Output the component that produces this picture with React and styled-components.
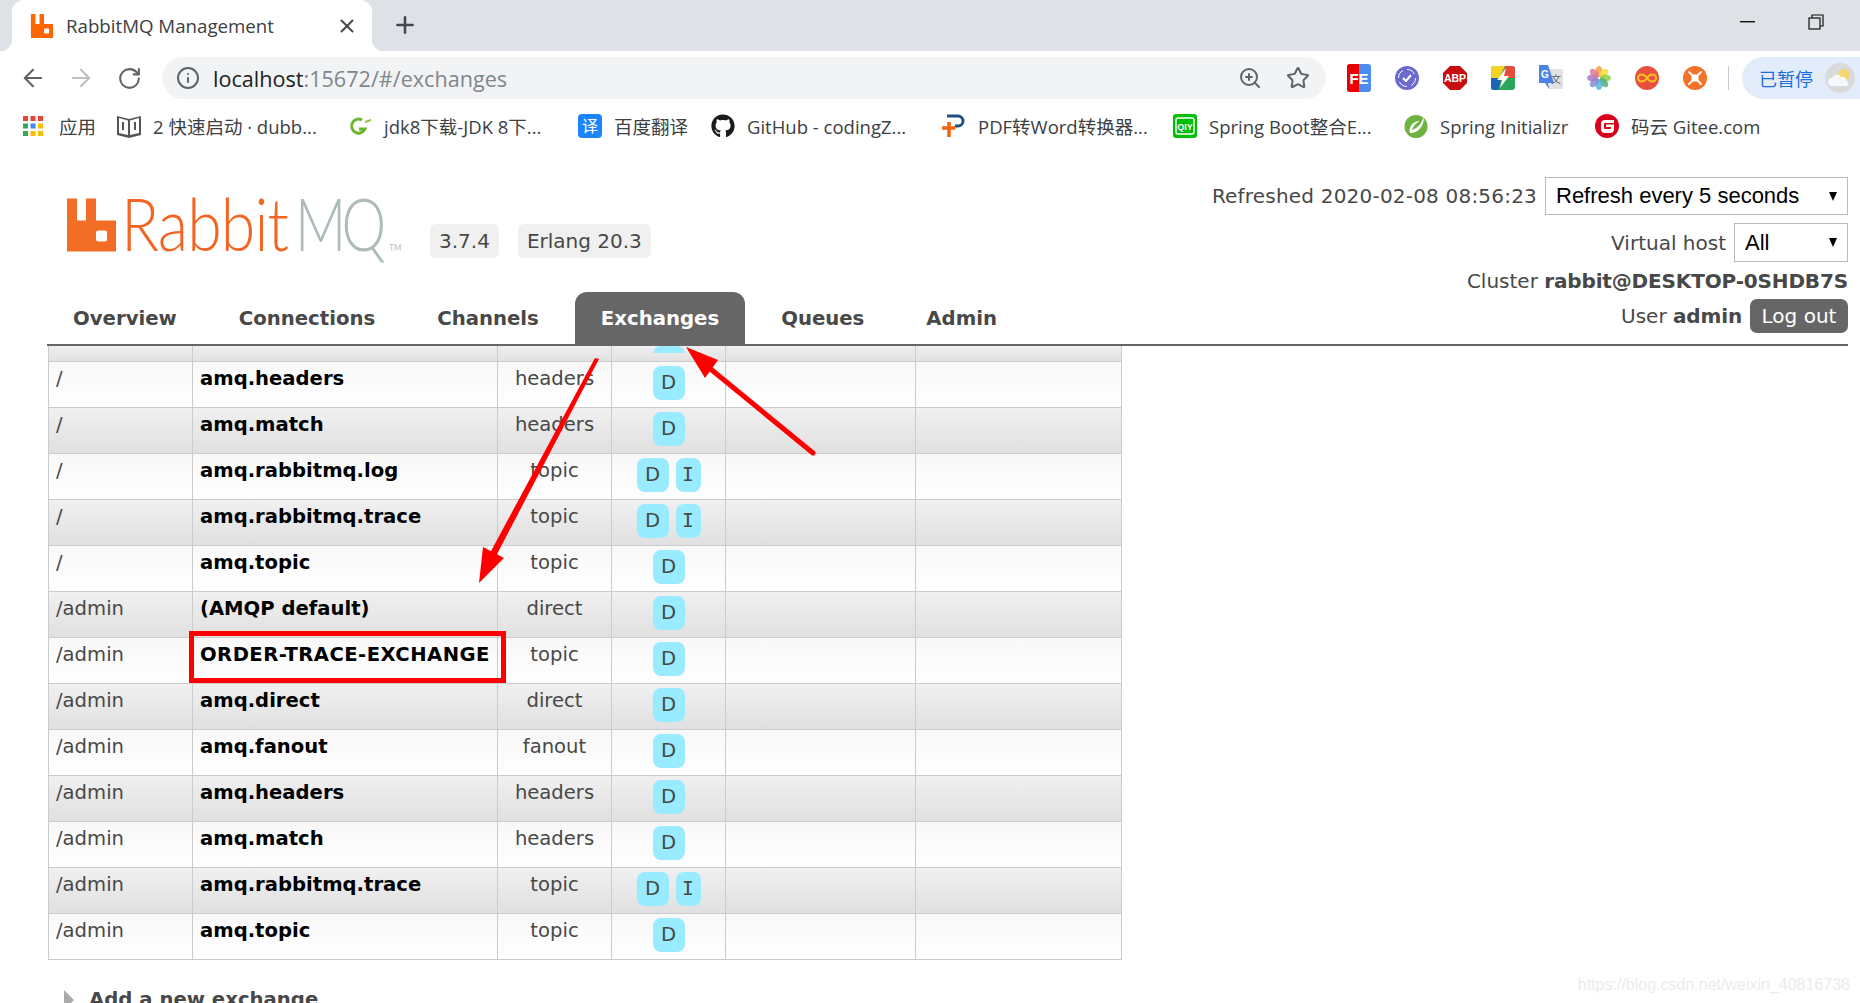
import React from 'react'
import styled, { createGlobalStyle } from 'styled-components'
import { ArrowLeft, ArrowRight, RotateCw, Info, ZoomIn, Star, X, Plus } from 'lucide-react'
import { FaGithub } from 'react-icons/fa'

const GlobalStyle = createGlobalStyle`
  html, body { margin: 0; padding: 0; background: #fff; overflow: hidden; }
`

const UI_FONT = `"Open Sans", "Noto Sans CJK SC", sans-serif`
const PAGE_FONT = `"DejaVu Sans", Verdana, sans-serif`

const Frame = styled.div`
  position: relative;
  width: 1860px;
  height: 1003px;
  overflow: hidden;
  background: #fff;
`

/* browser chrome */
const TabStrip = styled.div`
  display: flex;
  align-items: flex-end;
  height: 51px;
  padding: 0 36px 0 12px;
  background: #dee1e6;
  box-sizing: border-box;
`
const Tab = styled.div`
  position: relative;
  display: flex;
  align-items: center;
  width: 360px;
  height: 51px;
  padding: 0 14px 0 18px;
  box-sizing: border-box;
  background: #fff;
  border-radius: 12px 12px 0 0;
  font: 18.7px ${UI_FONT};
  color: #3c4043;

  &::before, &::after {
    content: '';
    position: absolute;
    bottom: 0;
    width: 12px;
    height: 12px;
  }
  &::before { left: -12px; background: radial-gradient(circle at 0 0, #dee1e6 12px, #fff 12.5px); }
  &::after { right: -12px; background: radial-gradient(circle at 100% 0, #dee1e6 12px, #fff 12.5px); }
`
const TabTitle = styled.span`
  margin-left: 12px;
  flex: 1;
`
const NewTab = styled.div`
  display: flex;
  margin: 0 0 13px 20px;
  color: #45484d;
`
const WindowButtons = styled.div`
  display: flex;
  align-items: center;
  gap: 53px;
  margin: 0 0 21px auto;
`
const Toolbar = styled.div`
  display: flex;
  align-items: center;
  height: 54px;
  padding: 0 0 0 9px;
  box-sizing: border-box;
`
const NavButton = styled.div`
  display: flex;
  justify-content: center;
  width: 48px;
  color: ${p => (p.$off ? '#bdc1c6' : '#5f6368')};
`
const Omnibox = styled.div`
  display: flex;
  align-items: center;
  width: 1164px;
  height: 42px;
  margin-left: 9px;
  padding: 0 16px 0 14px;
  box-sizing: border-box;
  border-radius: 21px;
  background: #f1f3f4;
  color: #5f6368;
`
const Url = styled.div`
  margin-left: 13px;
  flex: 1;
  font: 21.6px ${UI_FONT};
  color: #80868b;
  b { font-weight: 400; color: #202124; }
`
const OmniIcons = styled.div`
  display: flex;
  align-items: center;
  gap: 24px;
`
const Extensions = styled.div`
  display: flex;
  align-items: center;
  margin-left: 9px;
`
const ExtSlot = styled.div`
  display: flex;
  justify-content: center;
  width: 48px;
`
const Divider = styled.div`
  width: 1px;
  height: 24px;
  margin: 0 13px 0 9px;
  background: #c8cacd;
`
const PausePill = styled.div`
  display: flex;
  align-items: center;
  width: 118px;
  height: 42px;
  padding-left: 17px;
  box-sizing: border-box;
  border-radius: 21px 0 0 21px;
  background: #e3ecfa;
  font: 18px "Noto Sans CJK SC", sans-serif;
  color: #1a6fd8;
`
const Avatar = styled.div`
  display: flex;
  margin-left: 12px;
`
const BookmarkBar = styled.div`
  display: flex;
  align-items: center;
  height: 42px;
  margin-bottom: 4px;
  padding-left: 23px;
  box-sizing: border-box;
  font: 18.5px ${UI_FONT};
  color: #3c4043;
`
const Bookmark = styled.div`
  display: flex;
  align-items: center;
  flex: none;
  width: ${p => p.$w}px;
  gap: 12px;
  white-space: nowrap;
`

/* rabbit page */
const Top = styled.div`
  display: flex;
  justify-content: space-between;
  height: 193px;
  margin: 0 12px 0 47px;
  border-bottom: 2px solid #666;
  font: 20px ${PAGE_FONT};
  color: #484848;
`
const TopLeft = styled.div`
  display: flex;
  flex-direction: column;
  justify-content: space-between;
`
const LogoRow = styled.div`
  display: flex;
  align-items: flex-start;
  padding: 47px 0 0 20px;
`
const LogoBox = styled.div`
  width: 278px;
  height: 54px;
  margin-left: 5px;
`
const LogoText = styled.div`
  display: flex;
  align-items: baseline;
  width: 320px;
  font: 300 72px/50px Lato, sans-serif;
  color: #f26522;
  letter-spacing: -1px;
  transform: scaleX(0.87);
  transform-origin: left top;
`
const LogoMQ = styled.span`
  display: inline-block;
  margin: 0 -10px 0 8px;
  color: #aebcb4;
  letter-spacing: -6px;
  transform: scaleX(0.9);
  transform-origin: left top;
`
const LogoTM = styled.span`
  margin-left: 8px;
  font: 9px Lato, sans-serif;
  letter-spacing: 0;
  color: #bbb;
`
const Badge = styled.span`
  display: flex;
  align-items: center;
  height: 34px;
  margin: 26px 0 0 ${p => p.$ml}px;
  padding: 0 9px;
  border-radius: 6px;
  background: #f0f0f0;
`
const Tabs = styled.div`
  display: flex;
  gap: 10px;
`
const NavTab = styled.div`
  display: flex;
  align-items: center;
  height: 52px;
  padding: 0 26px;
  border-radius: 12px 12px 0 0;
  font-size: 19.7px;
  font-weight: 700;
  color: ${p => (p.$active ? '#fff' : '#484848')};
  background: ${p => (p.$active ? '#666' : 'transparent')};
`
const Status = styled.div`
  display: flex;
  flex-direction: column;
  align-items: flex-end;
  padding-top: 26px;
`
const StatusRow = styled.div`
  display: flex;
  align-items: center;
  justify-content: flex-end;
  gap: 8px;
  height: ${p => p.$h}px;
  margin-bottom: ${p => p.$mb || 0}px;
  letter-spacing: ${p => p.$ls || 0}px;
  b { font-weight: 700; letter-spacing: -0.15px; }
`
const FakeSelect = styled.div`
  display: flex;
  align-items: center;
  justify-content: space-between;
  width: ${p => p.$w}px;
  height: 100%;
  padding: 0 10px;
  box-sizing: border-box;
  border: 1px solid #bbb;
  font: 22px "Liberation Sans", Arial, sans-serif;
  letter-spacing: 0;
  color: #000;
`
const SelectArrow = styled.span`
  width: 0;
  height: 0;
  border-left: 4.5px solid transparent;
  border-right: 4.5px solid transparent;
  border-top: 9px solid #000;
`
const LogOut = styled.div`
  display: flex;
  align-items: center;
  justify-content: center;
  width: 98px;
  height: 34px;
  border-radius: 7px;
  background: #666;
  color: #fff;
`
const Grid = styled.table`
  width: 1073px;
  margin-left: 48px;
  table-layout: fixed;
  border-collapse: collapse;
  font: 19.6px ${PAGE_FONT};
  color: #484848;
`
const Row = styled.tr`
  background: ${p => (p.$alt
    ? 'linear-gradient(#f0f0f0, #e0e0e0)'
    : 'linear-gradient(#f8f8f8, #ffffff)')};
`
const Cell = styled.td`
  height: 46px;
  padding: 4px 7px 0;
  box-sizing: border-box;
  border: 1px solid #ccc;
  vertical-align: top;
  line-height: 26px;
  text-align: ${p => (p.$center ? 'center' : 'left')};
  white-space: nowrap;
`
const ClipCell = styled.td`
  height: 15px;
  padding: 0;
  border: 1px solid #ccc;
  border-top: 0;
`
const ClipBadges = styled.div`
  display: flex;
  justify-content: center;
  height: 7px;
  margin-bottom: 8px;
  overflow: hidden;
`
const Name = styled.span`
  font-weight: 700;
  color: #000;
  letter-spacing: ${p => (p.$caps ? 0.45 : 0)}px;
`
const Features = styled.div`
  display: flex;
  justify-content: center;
  gap: 7px;
`
const Feature = styled.span`
  display: flex;
  align-items: center;
  justify-content: center;
  flex: none;
  width: ${p => p.$w}px;
  height: 34px;
  border-radius: 8px;
  background: #99ebff;
  color: #484848;
  font-family: ${p => (p.$mono ? '"DejaVu Sans Mono", monospace' : 'inherit')};
  line-height: 1;
`
const AddSection = styled.div`
  display: flex;
  align-items: center;
  gap: 15px;
  margin: 28px 0 0 64px;
  font: 700 19.7px ${PAGE_FONT};
  color: #484848;
`
const Triangle = styled.span`
  width: 0;
  height: 0;
  border-left: 10px solid #aaa;
  border-top: 10px solid transparent;
  border-bottom: 10px solid transparent;
`
const Annotations = styled.svg`
  position: absolute;
  left: 0;
  top: 0;
  pointer-events: none;
`
const Watermark = styled.div`
  position: absolute;
  right: 10px;
  top: 976px;
  font: 16px "Liberation Sans", Arial, sans-serif;
  color: #ececec;
`

const RabbitMark = ({ w, h, color }) => (
  <svg width={w} height={h} viewBox="0 0 49 53">
    <path
      fillRule="evenodd"
      fill={color}
      d="M0 0H10V22H19V0H29V22H49V53H0ZM31 32a2 2 0 0 0-2 2V41a2 2 0 0 0 2 2H38a2 2 0 0 0 2-2V34a2 2 0 0 0-2-2Z"
    />
  </svg>
)

const RestoreIcon = () => (
  <svg width="16" height="16" viewBox="0 0 16 16" fill="none" stroke="#111" strokeWidth="1.2">
    <rect x="1" y="4" width="11" height="11" />
    <path d="M4 4V1H15V12H12" />
  </svg>
)
const MinimizeIcon = () => (
  <svg width="15" height="2" viewBox="0 0 15 2"><rect width="15" height="1.4" fill="#111" /></svg>
)

const AppsIcon = () => {
  const colors = ['#ea4335', '#ea4335', '#ea4335', '#34a853', '#4285f4', '#fbbc04', '#34a853', '#fbbc04', '#fbbc04']
  return (
    <svg width="24" height="24" viewBox="0 0 24 24">
      {colors.map((c, i) => (
        <rect key={i} x={0 + (i % 3) * 7.5} y={2 + Math.floor(i / 3) * 7.5} width="5" height="5" fill={c} />
      ))}
    </svg>
  )
}
const BookIcon = () => (
  <svg width="24" height="24" viewBox="0 0 24 24">
    <path fill="#555" d="M0 2 12 5 24 2V21L12 24 0 21Z" />
    <path fill="#fff" d="M2 4 11 6.500V21L2 19ZM22 4 13 6.500V21L22 19Z" />
    <path fill="#555" d="M5 8h2v8H5ZM17 8h2v8h-2Z" />
  </svg>
)
const GreenG = () => (
  <svg width="24" height="24" viewBox="0 0 24 24" fill="none" stroke="#6cb52d" strokeWidth="3">
    <path d="M14 6a7 7 0 1 0 3 9h-6" />
    <path d="M17 8l6-2" strokeWidth="2" stroke="#8cc63f" />
  </svg>
)
const YiIcon = () => (
  <svg width="24" height="24" viewBox="0 0 24 24">
    <rect width="24" height="24" rx="4" fill="#1a85ff" />
    <text x="12" y="18" textAnchor="middle" fontSize="16" fill="#fff" fontFamily="Noto Sans CJK SC">译</text>
  </svg>
)
const PdfIcon = () => (
  <svg width="24" height="24" viewBox="0 0 24 24" fill="none">
    <path d="M5 2H16a5 5 0 0 1 0 10H13" stroke="#1d4f86" strokeWidth="3" />
    <path d="M0 14H13M7 8V23" stroke="#f4640f" strokeWidth="3.600" />
  </svg>
)
const IqiyiIcon = () => (
  <svg width="24" height="24" viewBox="0 0 24 24">
    <rect width="24" height="24" rx="3" fill="#00be06" />
    <rect x="3" y="4" width="18" height="16" rx="2" fill="none" stroke="#fff" strokeWidth="1.400" />
    <text x="12" y="16" textAnchor="middle" fontSize="9" fontWeight="700" fill="#fff" fontFamily="Liberation Sans">QIY</text>
  </svg>
)
const LeafIcon = () => (
  <svg width="24" height="24" viewBox="0 0 24 24">
    <circle cx="12" cy="12.500" r="11.500" fill="#6db33f" />
    <path fill="#fff" d="M20 2C20 12 15 19 6 19 4 13 9 7 16 7 12 9 9 12 8 16 14 14 18 9 20 2Z" />
  </svg>
)
const GiteeIcon = () => (
  <svg width="24" height="24" viewBox="0 0 24 24">
    <circle cx="12" cy="12" r="12" fill="#d9001b" />
    <path fill="#fff" d="M6 10a4 4 0 0 1 4-4h9v3H10a1 1 0 0 0-1 1v4a1 1 0 0 0 1 1h5a1 1 0 0 0 1-1v-1h-5v-2.500h8V15a4 4 0 0 1-4 4H10a4 4 0 0 1-4-4Z" />
  </svg>
)

const FeIcon = () => (
  <svg width="24" height="28" viewBox="0 0 24 28">
    <rect width="24" height="28" rx="3" fill="#4a8cf0" />
    <path d="M3 0H12V28H3a3 3 0 0 1-3-3V3a3 3 0 0 1 3-3Z" fill="#ea0000" />
    <text x="12" y="20" textAnchor="middle" fontSize="15" fontWeight="700" fill="#fff" fontFamily="Liberation Sans">FE</text>
  </svg>
)
const CheckIcon = () => (
  <svg width="24" height="24" viewBox="0 0 24 24" fill="none">
    <circle cx="12" cy="12" r="12" fill="#6a6ad0" />
    <circle cx="12" cy="12" r="8.500" stroke="#fff" strokeWidth="1" strokeDasharray="9 4.300" />
    <path d="M8 12l3 3 5-6" stroke="#fff" strokeWidth="2" />
  </svg>
)
const AbpIcon = () => (
  <svg width="24" height="24" viewBox="0 0 24 24">
    <path fill="#c70d0d" d="M7 0H17L24 7V17L17 24H7L0 17V7Z" />
    <text x="12" y="16" textAnchor="middle" fontSize="10.500" fontWeight="700" fill="#fff" fontFamily="Liberation Sans">ABP</text>
  </svg>
)
const BoltIcon = () => (
  <svg width="24" height="24" viewBox="0 0 24 24">
    <rect width="24" height="24" rx="3" fill="#2aa85a" />
    <path fill="#f5d327" d="M3 0H14L8 12H0V3a3 3 0 0 1 3-3Z" />
    <path fill="#e74c3c" d="M14 0H21a3 3 0 0 1 3 3V12H12Z" />
    <path fill="#1a63b8" d="M0 12H10L7 24H3a3 3 0 0 1-3-3Z" />
    <path fill="#fff" d="M15 2 6 14H11L9 22 18 10H13Z" />
  </svg>
)
const TranslateIcon = () => (
  <svg width="24" height="26" viewBox="0 0 24 26">
    <rect x="9" y="4" width="15" height="20" fill="#e2e2e2" />
    <text x="17" y="18" textAnchor="middle" fontSize="10" fill="#666" fontFamily="Noto Sans CJK SC">文</text>
    <path fill="#4a84ea" d="M0 0H9L15 18H9L10 24 6 18H0Z" />
    <text x="6" y="13" textAnchor="middle" fontSize="10" fontWeight="700" fill="#fff" fontFamily="Liberation Sans">G</text>
  </svg>
)
const FlowerIcon = () => {
  const petals = ['#f4a13a', '#f4dc3a', '#8bcf4a', '#4fae72', '#58b8e0', '#7f8fd8', '#a57ac8', '#d87a9e']
  return (
    <svg width="24" height="24" viewBox="0 0 24 24">
      {petals.map((c, i) => (
        <ellipse key={i} cx="12" cy="5.500" rx="3.500" ry="5.500" fill={c} fillOpacity="0.85" transform={`rotate(${i * 45} 12 12)`} />
      ))}
    </svg>
  )
}
const InfinityIcon = () => (
  <svg width="24" height="24" viewBox="0 0 24 24" fill="none">
    <circle cx="12" cy="12" r="12" fill="#e8503f" />
    <path d="M12 12C10 9 8 8.500 6.500 8.500a3.500 3.500 0 0 0 0 7C8 15.500 10 15 12 12S16 8.500 17.500 8.500a3.500 3.500 0 0 1 0 7C16 15.500 14 15 12 12Z" stroke="#f6c21c" strokeWidth="2" />
  </svg>
)
const OrangeIcon = () => (
  <svg width="24" height="24" viewBox="0 0 24 24" fill="none">
    <circle cx="12" cy="12" r="12" fill="#f4722a" />
    <path d="M6 6l12 12M18 6 6 18" stroke="#fff" strokeWidth="1.800" strokeLinecap="round" />
    <rect x="8.500" y="8.500" width="7" height="7" rx="1.500" fill="#fff" />
  </svg>
)
const WeatherIcon = () => (
  <svg width="30" height="30" viewBox="0 0 30 30">
    <circle cx="15" cy="15" r="15" fill="#d9dadc" />
    <circle cx="19" cy="12" r="6" fill="#f5d76e" />
    <path fill="#f4f8fd" d="M7 23a4 4 0 0 1 0-8 5 5 0 0 1 9-1 4.500 4.500 0 0 1 6 4.500 3 3 0 0 1 0 4.500Z" />
  </svg>
)

const bookmarks = [
  { w: 94, icon: <AppsIcon />, label: '应用' },
  { w: 231, icon: <BookIcon />, label: '2 快速启动 · dubb...' },
  { w: 230, icon: <GreenG />, label: 'jdk8下载-JDK 8下...' },
  { w: 133, icon: <YiIcon />, label: '百度翻译' },
  { w: 231, icon: <FaGithub size={24} color="#1b1b1b" />, label: 'GitHub - codingZ...' },
  { w: 231, icon: <PdfIcon />, label: 'PDF转Word转换器...' },
  { w: 231, icon: <IqiyiIcon />, label: 'Spring Boot整合E...' },
  { w: 191, icon: <LeafIcon />, label: 'Spring Initializr' },
  { w: 200, icon: <GiteeIcon />, label: '码云 Gitee.com' },
]

const extensions = [FeIcon, CheckIcon, AbpIcon, BoltIcon, TranslateIcon, FlowerIcon, InfinityIcon, OrangeIcon]

const navTabs = ['Overview', 'Connections', 'Channels', 'Exchanges', 'Queues', 'Admin']

const exchanges = [
  ['/', 'amq.headers', 'headers', 'D'],
  ['/', 'amq.match', 'headers', 'D'],
  ['/', 'amq.rabbitmq.log', 'topic', 'DI'],
  ['/', 'amq.rabbitmq.trace', 'topic', 'DI'],
  ['/', 'amq.topic', 'topic', 'D'],
  ['/admin', '(AMQP default)', 'direct', 'D'],
  ['/admin', 'ORDER-TRACE-EXCHANGE', 'topic', 'D'],
  ['/admin', 'amq.direct', 'direct', 'D'],
  ['/admin', 'amq.fanout', 'fanout', 'D'],
  ['/admin', 'amq.headers', 'headers', 'D'],
  ['/admin', 'amq.match', 'headers', 'D'],
  ['/admin', 'amq.rabbitmq.trace', 'topic', 'DI'],
  ['/admin', 'amq.topic', 'topic', 'D'],
]

function App() {
  return (
    <Frame>
      <GlobalStyle />
      <TabStrip>
        <Tab>
          <RabbitMark w={24} h={24} color="#ff6600" />
          <TabTitle>RabbitMQ Management</TabTitle>
          <X size={22} strokeWidth={2.2} color="#45484d" />
        </Tab>
        <NewTab><Plus size={26} strokeWidth={2.4} /></NewTab>
        <WindowButtons>
          <MinimizeIcon />
          <RestoreIcon />
        </WindowButtons>
      </TabStrip>

      <Toolbar>
        <NavButton><ArrowLeft size={28} strokeWidth={1.8} /></NavButton>
        <NavButton $off><ArrowRight size={28} strokeWidth={1.8} /></NavButton>
        <NavButton><RotateCw size={25} strokeWidth={2} /></NavButton>
        <Omnibox>
          <Info size={24} strokeWidth={2} />
          <Url><b>localhost</b>:15672/#/exchanges</Url>
          <OmniIcons>
            <ZoomIn size={24} strokeWidth={2} />
            <Star size={24} strokeWidth={2} />
          </OmniIcons>
        </Omnibox>
        <Extensions>
          {extensions.map((Icon, i) => (
            <ExtSlot key={i}><Icon /></ExtSlot>
          ))}
        </Extensions>
        <Divider />
        <PausePill>
          已暂停
          <Avatar><WeatherIcon /></Avatar>
        </PausePill>
      </Toolbar>

      <BookmarkBar>
        {bookmarks.map(b => (
          <Bookmark key={b.label} $w={b.w}>
            {b.icon}
            <span>{b.label}</span>
          </Bookmark>
        ))}
      </BookmarkBar>

      <Top>
        <TopLeft>
          <LogoRow>
            <RabbitMark w={49} h={54} color="#f26d25" />
            <LogoBox>
              <LogoText>
                Rabbit<LogoMQ>MQ</LogoMQ><LogoTM>TM</LogoTM>
              </LogoText>
            </LogoBox>
            <Badge $ml={31}>3.7.4</Badge>
            <Badge $ml={19}>Erlang 20.3</Badge>
          </LogoRow>
          <Tabs>
            {navTabs.map(t => (
              <NavTab key={t} $active={t === 'Exchanges'}>{t}</NavTab>
            ))}
          </Tabs>
        </TopLeft>
        <Status>
          <StatusRow $h={38} $mb={8} $ls={0.2}>
            Refreshed 2020-02-08 08:56:23
            <FakeSelect $w={303}>Refresh every 5 seconds<SelectArrow /></FakeSelect>
          </StatusRow>
          <StatusRow $h={39} $mb={2}>
            Virtual host
            <FakeSelect $w={114}>All<SelectArrow /></FakeSelect>
          </StatusRow>
          <StatusRow $h={34}>
            <span>Cluster <b>rabbit@DESKTOP-0SHDB7S</b></span>
          </StatusRow>
          <StatusRow $h={36}>
            <span>User <b>admin</b></span>
            <LogOut>Log out</LogOut>
          </StatusRow>
        </Status>
      </Top>

      <Grid>
        <colgroup>
          <col style={{ width: 144 }} />
          <col style={{ width: 305 }} />
          <col style={{ width: 114 }} />
          <col style={{ width: 114 }} />
          <col style={{ width: 190 }} />
          <col style={{ width: 206 }} />
        </colgroup>
        <tbody>
          <Row $alt>
            <ClipCell />
            <ClipCell />
            <ClipCell />
            <ClipCell>
              <ClipBadges><Feature $w={32} /></ClipBadges>
            </ClipCell>
            <ClipCell />
            <ClipCell />
          </Row>
          {exchanges.map((e, i) => (
            <Row key={i} $alt={i % 2 === 1}>
              <Cell>{e[0]}</Cell>
              <Cell><Name $caps={e[1] === e[1].toUpperCase()}>{e[1]}</Name></Cell>
              <Cell $center>{e[2]}</Cell>
              <Cell>
                <Features>
                  <Feature $w={32}>D</Feature>
                  {e[3] === 'DI' && <Feature $w={25} $mono>I</Feature>}
                </Features>
              </Cell>
              <Cell />
              <Cell />
            </Row>
          ))}
        </tbody>
      </Grid>

      <AddSection>
        <Triangle />
        Add a new exchange
      </AddSection>

      <Annotations width="1860" height="1003" viewBox="0 0 1860 1003">
        <rect x="191.500" y="633.500" width="312" height="47" fill="none" stroke="#f00" strokeWidth="5" />
        <path d="M813 453 702 362" stroke="#f00" strokeWidth="5" strokeLinecap="round" />
        <polygon points="686,347 718,360 705,378" fill="#f00" />
        <polygon points="595,358 599,359 496,556 490,553" fill="#f00" />
        <polygon points="479,583 483,547 504,558" fill="#f00" />
      </Annotations>
      <Watermark>https://blog.csdn.net/weixin_40816738</Watermark>
    </Frame>
  )
}

export default App
